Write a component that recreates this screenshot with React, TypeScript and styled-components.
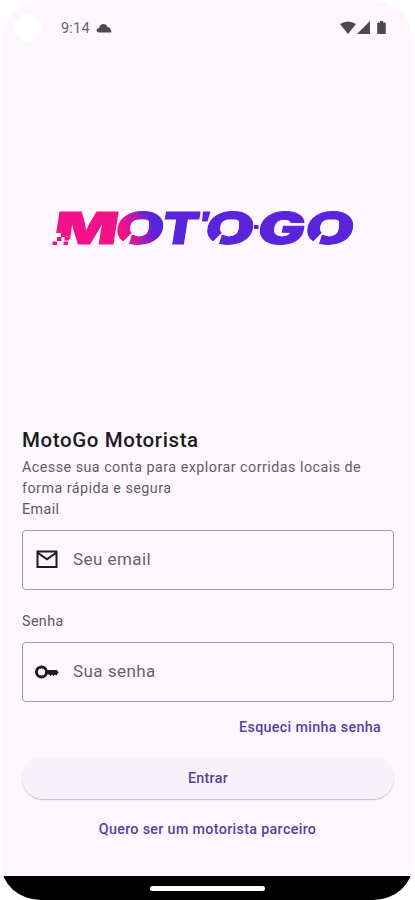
import React from "react";
import styled, { createGlobalStyle } from "styled-components";

const surface = "#fef7ff";
const purple = "#5a24dc";
const pink = "#f4128a";

const GlobalStyle = createGlobalStyle`
  * { box-sizing: border-box; }
  body { margin: 0; background: #fff; font-family: Roboto, "Liberation Sans", sans-serif; }
`;

const Phone = styled.main`
  width: 412px;
  height: 900px;
  margin-left: 1px;
  display: flex;
  flex-direction: column;
  overflow: hidden;
  background: ${surface};
  border-radius: 42px 42px 40px 40px / 42px 42px 36px 36px;
`;

const StatusBar = styled.header`
  height: 56px;
  padding: 0 27px 0 13px;
  display: flex;
  align-items: center;
  flex: none;
`;

const Camera = styled.span`
  width: 28px;
  height: 28px;
  border-radius: 50%;
  background: #fff;
`;

const Clock = styled.time`
  margin: 2px 0 0 19px;
  width: 35px;
  font-size: 14.5px;
  letter-spacing: 0.2px;
  line-height: 20px;
  color: #6b666d;
`;

const StatusIcon = styled.svg<{ $gap?: number }>`
  display: block;
  margin-left: ${(p) => p.$gap ?? 0}px;
  fill: #4d494f;
`;

const Spacer = styled.span`
  flex: 1;
`;

const Hero = styled.div`
  height: 371px;
  padding: 145px 0 0 48px;
  flex: none;
`;

const Wordmark = styled.svg`
  display: block;
  font-family: Inter, sans-serif;
  font-weight: 900;
  font-size: 44px;
  stroke-width: 1;
`;

const Form = styled.form`
  height: 449px;
  padding: 0 20px 0 21px;
  display: flex;
  flex-direction: column;
  flex: none;
`;

const Title = styled.h1`
  margin: 0;
  height: 30px;
  font-size: 20.5px;
  line-height: 27px;
  font-weight: 500;
  letter-spacing: 0.6px;
  color: #1d1b20;
`;

const Description = styled.p`
  margin: 0;
  font-size: 14.3px;
  line-height: 21px;
  letter-spacing: 0.48px;
  color: #625d65;
`;

const Label = styled.label<{ $top?: number }>`
  margin-top: ${(p) => p.$top ?? 0}px;
  height: 21px;
  font-size: 14.3px;
  line-height: 21px;
  letter-spacing: 0.4px;
  color: #5c5760;
`;

const Field = styled.div<{ $top: number }>`
  margin-top: ${(p) => p.$top}px;
  width: 372px;
  height: 60px;
  padding: 0 0 2px 12px;
  display: flex;
  align-items: center;
  border: 1px solid #a19ba3;
  border-radius: 4px;
`;

const FieldIcon = styled.svg`
  display: block;
  flex: none;
  fill: #1d1b20;
`;

const Input = styled.input`
  width: 300px;
  margin-left: 14px;
  padding: 0;
  border: 0;
  outline: 0;
  background: transparent;
  font: 400 17px/24px Roboto, sans-serif;
  letter-spacing: 0.45px;
  color: #1d1b20;
  &::placeholder { color: #67626a; opacity: 1; }
`;

const TextButton = styled.button<{ $align: string; $top: number; $right?: number }>`
  align-self: ${(p) => p.$align};
  margin: ${(p) => p.$top}px ${(p) => p.$right ?? 0}px 0 0;
  padding: 0;
  border: 0;
  background: none;
  font: 500 14.3px/20px Roboto, sans-serif;
  letter-spacing: 0.33px;
  color: #56439b;
`;

const SubmitButton = styled.button`
  width: 372px;
  height: 42px;
  margin-top: 20px;
  padding: 0;
  flex: none;
  border: 0;
  border-radius: 21px;
  background: #f7f2fa;
  box-shadow: 0 1px 1px rgba(0, 0, 0, 0.18), 0 1px 3px rgba(0, 0, 0, 0.05);
  font: 500 14.3px/20px Roboto, sans-serif;
  letter-spacing: 0.3px;
  color: #56439b;
`;

const NavBar = styled.footer`
  height: 24px;
  display: flex;
  align-items: center;
  justify-content: center;
  background: #000;
`;

const HomeHandle = styled.span`
  width: 115px;
  height: 5px;
  border-radius: 3px;
  background: #fff;
`;

function MotoGoLogo() {
  return (
    <Wordmark width="312" height="60" viewBox="49 201 312 60" role="img" aria-label="MotoGo">
      <defs>
        <linearGradient id="fade" x1="0.1" y1="0.7" x2="0.85" y2="0.3">
          <stop offset="0.15" stopColor={pink} />
          <stop offset="0.45" stopColor="#b51ba9" />
          <stop offset="0.8" stopColor={purple} />
        </linearGradient>
      </defs>
      <text fill={pink} stroke={pink} transform="translate(52 243.500) skewX(-9) scale(1.52 1)">M</text>
      <text fill="url(#fade)" stroke="url(#fade)" transform="translate(113.500 243.500) skewX(-9) scale(1.42 1)">O</text>
      <text fill={purple} stroke={purple} transform="translate(160 243.500) skewX(-9) scale(1.2 1)">T</text>
      <text fill={purple} stroke={purple} transform="translate(203.500 243.500) skewX(-9) scale(1.42 1)">O</text>
      <text fill={purple} stroke={purple} transform="translate(256 243.500) skewX(-9) scale(1.42 1)">G</text>
      <text fill={purple} stroke={purple} transform="translate(303.500 243.500) skewX(-9) scale(1.42 1)">O</text>
      <path fill={purple} d="M203 211.500h7.500l-3 10h-5.500zM254 225h4.500v4h-4.500z" />
      <g fill={surface}>
        <path
          id="notch"
          d="M211.500 243l10.500-10.500q-2.500-1-2-5 1-7.500 8-8h7q5 0 4 5l-1.200 6q-1 4.500-6 4.500h-10l-3 9.500h-7z"
        />
        <use href="#notch" x="-90" />
        <use href="#notch" x="100" />
        <path d="M50 233h13v3h5v3h6v7H50z" />
      </g>
      <path fill={pink} d="M61 233h5v4h-5zM57 237h4.500v4H57zM64.500 236.500h4.500v4h-4.500zM52.500 241.500h4.500v3.500h-4.500zM63.500 241.500h4.500v3.500h-4.500z" />
    </Wordmark>
  );
}

export default function App() {
  return (
    <>
      <GlobalStyle />
      <Phone>
        <StatusBar>
          <Camera />
          <Clock>9:14</Clock>
          <StatusIcon width="16" height="10" viewBox="0 0 16 10">
            <path d="M3 9.500Q.5 9.500.5 7.500.5 5.500 3 5 4 1 7.500 1q3 0 4 3 3.500.5 4 5.500z" />
          </StatusIcon>
          <Spacer />
          <StatusIcon width="16" height="14" viewBox="0 0 16 14">
            <path d="M0 3Q8-2 16 3L8 13z" />
          </StatusIcon>
          <StatusIcon $gap={1} width="14" height="14" viewBox="0 0 14 14">
            <path d="M13 0v13H0z" />
          </StatusIcon>
          <StatusIcon $gap={6} width="9" height="14" viewBox="0 0 9 14">
            <path d="M3 0h3v1.500h2q.8 0 .8.800V13H.2V2.300q0-.8.800-.8h2z" />
          </StatusIcon>
        </StatusBar>
        <Hero>
          <MotoGoLogo />
        </Hero>
        <Form onSubmit={(e) => e.preventDefault()}>
          <Title>MotoGo Motorista</Title>
          <Description>
            Acesse sua conta para explorar corridas locais de
            <br />
            forma rápida e segura
          </Description>
          <Label htmlFor="email">Email</Label>
          <Field $top={10}>
            <FieldIcon width="24" height="24" viewBox="0 0 24 24">
              <path fillRule="evenodd" d="M1.500 3.500h21v17.500h-21zm2 4v11.500h17V7.500L12 13.500zM4 5.500l8 5.500 8-5.500z" />
            </FieldIcon>
            <Input id="email" type="email" placeholder="Seu email" />
          </Field>
          <Label $top={21} htmlFor="senha">Senha</Label>
          <Field $top={10}>
            <FieldIcon width="24" height="24" viewBox="0 0 24 24">
              <path
                fillRule="evenodd"
                d="M6.500 6.500a6.500 6.500 0 1 0 6 9H14l1.500 1.500 1.500-1.500 1.500 1.500 1.500-1.500 1.500 1 2-3-1.500-2.500h-9.400A6.500 6.500 0 0 0 6.500 6.500zm0 2.900a3.600 3.600 0 1 1 0 7.200 3.600 3.600 0 0 1 0-7.200z"
              />
            </FieldIcon>
            <Input id="senha" type="password" placeholder="Sua senha" />
          </Field>
          <TextButton type="button" $align="flex-end" $top={15} $right={12}>Esqueci minha senha</TextButton>
          <SubmitButton type="submit">Entrar</SubmitButton>
          <TextButton type="button" $align="center" $top={20}>Quero ser um motorista parceiro</TextButton>
        </Form>
        <NavBar>
          <HomeHandle />
        </NavBar>
      </Phone>
    </>
  );
}
